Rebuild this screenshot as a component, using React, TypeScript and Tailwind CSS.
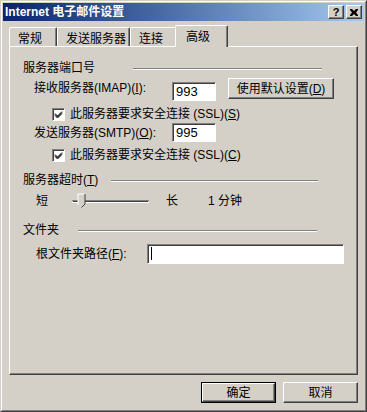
const ui = "font-['Liberation_Sans','Noto_Sans_CJK_SC',sans-serif] text-[12px] leading-[16px] text-black";

function Raised({ children, className = "" }: { children?: React.ReactNode; className?: string }) {
  return (
    <div
      className={`flex items-center justify-center bg-[#d4d0c8] border border-t-white border-l-white border-r-[#404040] border-b-[#404040] shadow-[inset_-1px_-1px_0_#808080] ${className}`}
    >
      {children}
    </div>
  );
}

function Field({ value = "", className = "", caret = false }: { value?: string; className?: string; caret?: boolean }) {
  return (
    <div
      className={`flex items-center bg-white border border-t-[#808080] border-l-[#808080] border-r-white border-b-white shadow-[inset_1px_1px_0_#404040] pl-[3px] ${className}`}
    >
      {caret ? <div className="w-px h-[13px] bg-black" /> : <span className="font-['Liberation_Sans',sans-serif] text-[13px]">{value}</span>}
    </div>
  );
}

function Check({ children }: { children: React.ReactNode }) {
  return (
    <div className="flex items-center h-[16px] pl-[42px]">
      <div className="w-[13px] h-[13px] bg-white border border-t-[#808080] border-l-[#808080] border-r-white border-b-white shadow-[inset_1px_1px_0_#404040] flex items-center justify-center">
        <svg width="9" height="9" viewBox="0 0 9 9">
          <path d="M1 3.5 L3.5 6 L8 1.5 M1 4.5 L3.5 7 L8 2.5 M1 5.5 L3.5 8 L8 3.5" stroke="#000" strokeWidth="1" fill="none" />
        </svg>
      </div>
      <span className="ml-[5px]">{children}</span>
    </div>
  );
}

function GroupHead({ label, labelW, lineW, className = "" }: { label: React.ReactNode; labelW: string; lineW: string; className?: string }) {
  return (
    <div className={`flex items-center h-[16px] pl-[13px] ${className}`}>
      <div className={labelW}>{label}</div>
      <div className={`${lineW} h-[2px] border-t border-t-[#808080] border-b border-b-white mt-[2px]`} />
    </div>
  );
}

function Tab({ children, className = "" }: { children: React.ReactNode; className?: string }) {
  return (
    <div
      className={`h-[19px] flex items-start pt-[3px] pl-[8px] bg-[#d4d0c8] border-t border-l border-t-white border-l-white border-r border-r-[#404040] shadow-[inset_-1px_0_0_#808080] rounded-t-[2px] ${className}`}
    >
      {children}
    </div>
  );
}

export default function App() {
  return (
    <div className={`${ui} w-[367px] h-[412px] bg-[#d4d0c8] border border-t-[#d4d0c8] border-l-[#d4d0c8] border-r-[#404040] border-b-[#404040]`}>
      <div className="w-full h-full border border-t-white border-l-white border-r-[#808080] border-b-[#808080] p-px flex flex-col">
        {/* title bar */}
        <div className="h-[18px] flex items-center bg-gradient-to-r from-[#0a246a] to-[#a6caf0] pl-[2px] pr-[2px]">
          <span className="text-white font-bold text-[12px] flex-1">Internet 电子邮件设置</span>
          <Raised className="w-[16px] h-[14px]">
            <span className="font-['Liberation_Sans',sans-serif] font-bold text-[11px] leading-[11px]">?</span>
          </Raised>
          <Raised className="w-[16px] h-[14px] ml-[2px]">
            <svg width="8" height="7" viewBox="0 0 8 7">
              <path d="M0 0h2l2 2 2-2h2v1L6 3.5 8 6v1H6L4 5 2 7H0V6l2-2.5L0 1z" fill="#000" />
            </svg>
          </Raised>
        </div>

        {/* tabs */}
        <div className="flex items-end h-[22px] mt-[3px] pl-[6px]">
          <Tab className="w-[48px]">常规</Tab>
          <Tab className="w-[73px] pl-[6px]">发送服务器</Tab>
          <Tab className="w-[47px] pl-[6px]">连接</Tab>
          <Tab className="w-[53px] h-[22px] -ml-[2px] -mb-px relative z-10 pl-[10px] pt-[2px]">高级</Tab>
        </div>

        {/* panel */}
        <div className="mx-[6px] h-[329px] border border-t-white border-l-white border-r-[#404040] border-b-[#404040] shadow-[inset_-1px_-1px_0_#808080] flex flex-col">
          <GroupHead className="mt-[13px]" label="服务器端口号" labelW="w-[110px]" lineW="w-[189px]" />

          <div className="flex items-start h-[23px] mt-[2px] pl-[24px]">
            <div className="w-[138px] mt-[2px]">
              接收服务器(IMAP)(<u>I</u>):
            </div>
            <Field value="993" className="w-[44px] h-[19px] mt-[4px]" />
            <Raised className="w-[106px] h-[21px] ml-[12px]">
              使用默认设置(<u>D</u>)
            </Raised>
          </div>

          <div className="mt-[5px]">
            <Check>
              此服务器要求安全连接 (SSL)(<u>S</u>)
            </Check>
          </div>

          <div className="flex items-center h-[19px] mt-px pl-[24px]">
            <div className="w-[138px]">
              发送服务器(SMTP)(<u>O</u>):
            </div>
            <Field value="995" className="w-[44px] h-[19px]" />
          </div>

          <div className="mt-[5px]">
            <Check>
              此服务器要求安全连接 (SSL)(<u>C</u>)
            </Check>
          </div>

          <GroupHead
            className="mt-[9px]"
            label={
              <>
                服务器超时(<u>T</u>)
              </>
            }
            labelW="w-[88px]"
            lineW="w-[207px]"
          />

          <div className="flex items-center h-[18px] mt-[4px] pl-[26px]">
            <div className="w-[36px]">短</div>
            <svg width="80" height="16" viewBox="0 0 80 16" className="block">
              <rect x="0" y="7" width="77" height="1" fill="#808080" />
              <rect x="1" y="8" width="75" height="1" fill="#404040" />
              <rect x="0" y="9" width="77" height="1" fill="#ffffff" />
              <path d="M6 1h7v10l-3.5 3.5L6 11z" fill="#d4d0c8" />
              <path d="M6 12V1h7" stroke="#ffffff" fill="none" strokeWidth="1" />
              <path d="M13 1v10l-3.5 3.5" stroke="#404040" fill="none" strokeWidth="1" />
            </svg>
            <div className="ml-[14px] w-[42px]">长</div>
            <div>1 分钟</div>
          </div>

          <GroupHead className="mt-[12px]" label="文件夹" labelW="w-[55px]" lineW="w-[239px]" />

          <div className="flex items-center h-[19px] mt-[6px] pl-[26px]">
            <div className="w-[111px]">
              根文件夹路径(<u>F</u>):
            </div>
            <Field caret className="w-[197px] h-[20px]" />
          </div>
        </div>

        {/* buttons */}
        <div className="flex justify-end gap-[7px] mt-[7px] pr-[6px]">
          <div className="border border-black">
            <Raised className="w-[73px] h-[19px]">确定</Raised>
          </div>
          <Raised className="w-[75px] h-[21px]">取消</Raised>
        </div>
      </div>
    </div>
  );
}
